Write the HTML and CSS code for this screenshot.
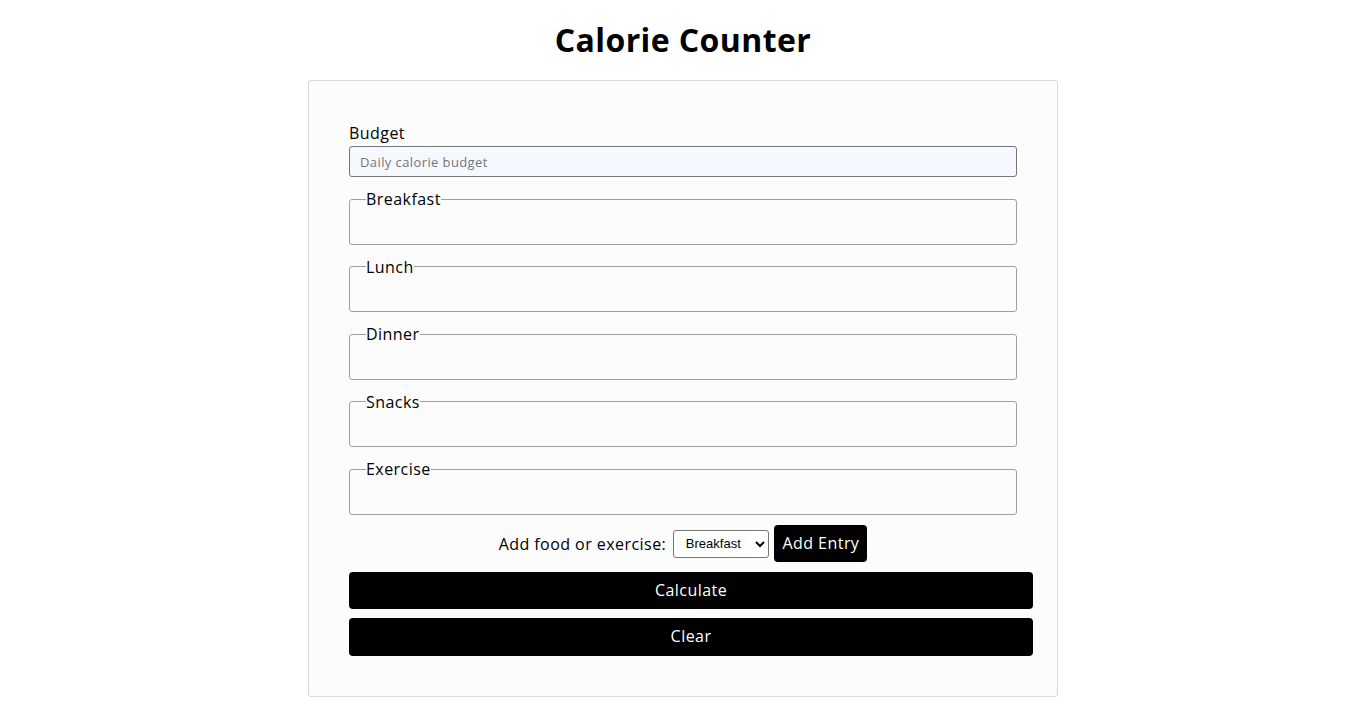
FILE: index.html
```html
<!DOCTYPE html>
<html lang="en">
<head>
    <meta charset="UTF-8">
    <meta name="viewport" content="width=device-width, initial-scale=1.0">
    <title>Calorie Counter</title>
    <link rel="stylesheet" href="styles.css">
</head>
<body>
    <main>
        <h1>Calorie Counter</h1>
        <div class="container">
            <form id="calorie-counter">
                <label for="budget" class="budget-label">Budget</label>
                <input type="number" min="0" id="budget" placeholder="Daily calorie budget" required>

                <fieldset id="breakfast">
                    <legend>Breakfast</legend>
                    <div class="input-container"></div>
                </fieldset>
                <fieldset id="lunch">
                    <legend>Lunch</legend>
                    <div class="input-container"></div>
                </fieldset>
                <fieldset id="dinner">
                    <legend>Dinner</legend>
                    <div class="input-container"></div>
                </fieldset>
                <fieldset id="snacks">
                    <legend>Snacks</legend>
                    <div class="input-container"></div>
                </fieldset>
                <fieldset id="exercise">
                    <legend>Exercise</legend>
                    <div class="input-container"></div>
                </fieldset>

                <div class="controls">
                    <span>
                        <label for="entry-dropdown">Add food or exercise:</label>
                        <select id="entry-dropdown" name="options">
                            <option value="breakfast" selected>Breakfast</option>
                            <option value="lunch">Lunch</option>
                            <option value="dinner">Dinner</option>
                            <option value="snacks">Snacks</option>
                            <option value="exercise">Exercise</option>
                        </select>
                        <button type="button" id="add-entry">Add Entry</button>
                    </span>
                </div>

                <div class="main-buttons">
                    <button type="submit">Calculate</button>
                    <button type="button" id="clear">Clear</button>
                </div>
            </form>
        </div>
    </main>
</body>
</html>
```

FILE: styles.css
```css
* {
    box-sizing: border-box;
}

body {
    margin: 0;
    padding: 0;
    font-family: "Open Sans", sans-serif;
    font-size: 16px;
    line-height: 1.5;
    letter-spacing: 0.45px;
    color: #000;
    background-color: #fff;
}

h1 {
    text-align: center;
    font-size: 32px;
    font-weight: 700;
    line-height: 48px;
    letter-spacing: 0.4px;
    margin: 16px 0;
}

.container {
    width: 750px;
    margin: 0 auto;
    padding: 40px;
    background-color: #fcfcfc;
    border: 1px solid #d9d9d9;
    border-radius: 3px;
}

label {
    display: inline-block;
}

.budget-label {
    display: block;
    line-height: 25px;
}

#budget {
    display: block;
    width: 100%;
    height: 31px;
    padding: 4px 10px;
    font-family: "Open Sans", sans-serif;
    font-size: 13px;
    letter-spacing: 0.4px;
    background-color: #f5f9ff;
    border: 1px solid #767676;
    border-radius: 3px;
}

#budget::placeholder {
    color: #757575;
}

fieldset {
    margin: 10px 0 0 0;
    padding: 0 16px 32.5px 16px;
    border: 1px solid #a0a0a0;
    border-radius: 3px;
}

legend {
    padding: 0;
    line-height: 24px;
}

.controls {
    margin-top: 10.5px;
    text-align: center;
}

.controls select {
    width: 96px;
    height: 28px;
    padding: 0 2px 0 8px;
    margin: 0 1px 0 2px;
    font-family: "Liberation Sans", Arial, sans-serif;
    font-size: 13px;
    letter-spacing: 0;
    border: 1px solid #767676;
    border-radius: 3px;
    background-color: #fff;
    vertical-align: middle;
}

.controls label {
    vertical-align: middle;
}

button {
    font-family: "Open Sans", sans-serif;
    font-size: 16px;
    line-height: 24px;
    letter-spacing: 0.45px;
    color: #fff;
    background-color: #000;
    border: none;
    border-radius: 4px;
    cursor: pointer;
}

#add-entry {
    padding: 6px 8px 7px 8px;
    vertical-align: middle;
}

.main-buttons button {
    display: block;
    width: calc(100% + 16px);
    margin-top: 10px;
    padding: 6px 0 7px 0;
}

.main-buttons button + button {
    margin-top: 9px;
    padding-bottom: 8px;
}
```
